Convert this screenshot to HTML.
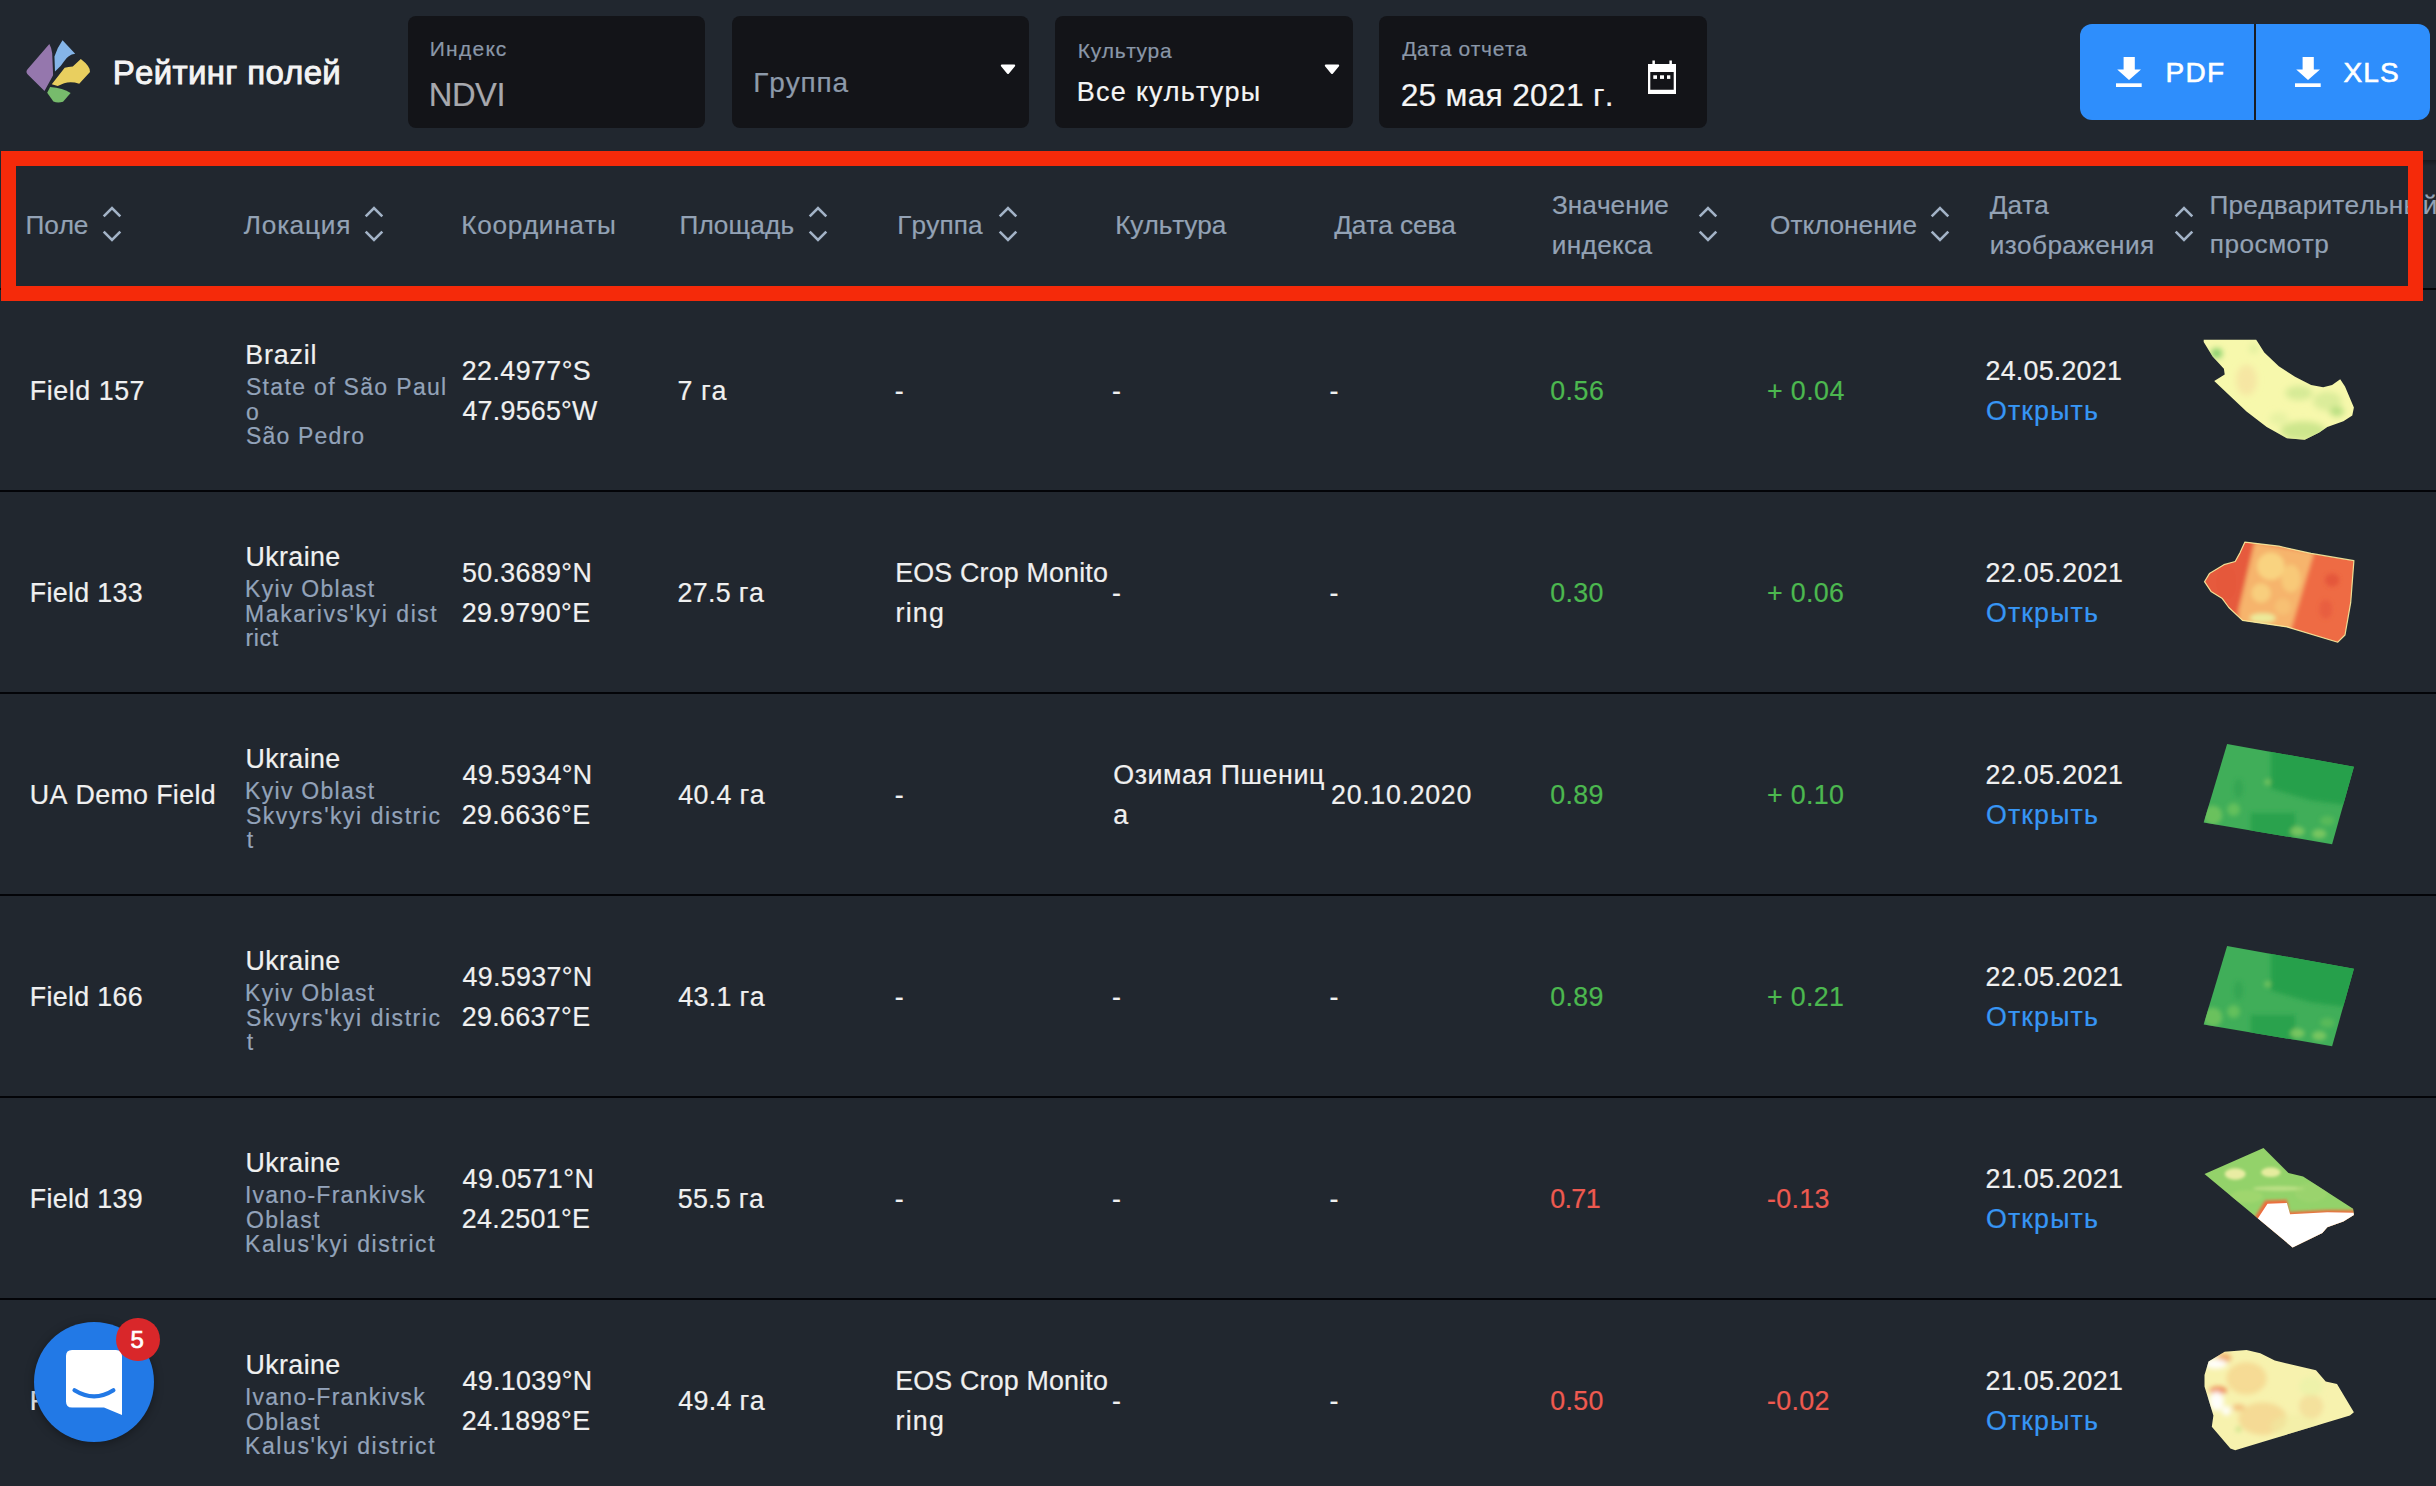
<!DOCTYPE html>
<html><head><meta charset="utf-8"><title>Рейтинг полей</title>
<style>
html,body{margin:0;padding:0;}
body{width:2436px;height:1486px;background:#21272f;position:relative;overflow:hidden;font-family:"Liberation Sans",sans-serif;}
.t{position:absolute;white-space:pre;font-kerning:none;font-variant-ligatures:none;}
</style></head><body>
<svg style="position:absolute;left:20px;top:30px" width="80" height="80" viewBox="0 0 1486 1486">
<path d="M545 262 Q585 330 598 430 L615 840 L455 1135 L140 820 Q100 775 140 730 Z" fill="#9577ad"/>
<path d="M790 190 L1025 440 Q890 460 820 580 Q760 680 650 770 L640 490 Q690 330 790 190 Z" fill="#85b5e8"/>
<path d="M590 1010 L830 700 Q900 690 980 680 L1130 540 Q1310 680 1300 780 L1100 1000 Q950 950 820 990 L700 1040 Z" fill="#e9cf5f"/>
<path d="M505 1165 L560 1060 Q800 1080 940 1170 L800 1335 Q700 1365 620 1330 Z" fill="#77bb6c"/>
</svg>
<div class="t" style="left:112.79px;top:51.97px;font-size:33px;line-height:41px;color:#f4f4f4;font-weight:400;letter-spacing:0.330px;-webkit-text-stroke:0.9px #f4f4f4">Рейтинг полей</div>
<div style="position:absolute;left:408px;top:16px;width:297px;height:112px;background:#131418;border-radius:8px"></div>
<div style="position:absolute;left:732px;top:16px;width:297px;height:112px;background:#131418;border-radius:8px"></div>
<div style="position:absolute;left:1055px;top:16px;width:298px;height:112px;background:#131418;border-radius:8px"></div>
<div style="position:absolute;left:1379px;top:16px;width:328px;height:112px;background:#131418;border-radius:8px"></div>
<div class="t" style="left:429.78px;top:35.62px;font-size:21px;line-height:26px;color:#8a97a8;font-weight:400;letter-spacing:1.253px;-webkit-text-stroke:0.2px #8a97a8;">Индекс</div>
<div class="t" style="left:428.82px;top:74.07px;font-size:32.7px;line-height:41px;color:#a7a8ad;font-weight:400;letter-spacing:-0.475px;-webkit-text-stroke:0.2px #a7a8ad;">NDVI</div>
<div class="t" style="left:753.30px;top:64.80px;font-size:28px;line-height:35px;color:#8d9aaa;font-weight:400;letter-spacing:0.813px;-webkit-text-stroke:0.2px #8d9aaa;">Группа</div>
<div class="t" style="left:1077.78px;top:38.12px;font-size:21px;line-height:26px;color:#8a97a8;font-weight:400;letter-spacing:0.631px;-webkit-text-stroke:0.2px #8a97a8;">Культура</div>
<div class="t" style="left:1076.79px;top:75.44px;font-size:27px;line-height:34px;color:#f5f5f5;font-weight:400;letter-spacing:1.267px;-webkit-text-stroke:0.2px #f5f5f5;">Все культуры</div>
<div class="t" style="left:1402.15px;top:35.52px;font-size:21px;line-height:26px;color:#8a97a8;font-weight:400;letter-spacing:0.661px;-webkit-text-stroke:0.2px #8a97a8;">Дата отчета</div>
<div class="t" style="left:1400.70px;top:74.88px;font-size:31.8px;line-height:40px;color:#f5f5f5;font-weight:400;letter-spacing:0.237px;-webkit-text-stroke:0.2px #f5f5f5;">25 мая 2021 г.</div>
<svg style="position:absolute;left:999px;top:63px" width="18" height="13" viewBox="0 0 18 13"><path d="M2.8 2.6 L15.2 2.6 L9 10 Z" fill="#fff" stroke="#fff" stroke-width="2" stroke-linejoin="round"/></svg>
<svg style="position:absolute;left:1323px;top:63px" width="18" height="13" viewBox="0 0 18 13"><path d="M2.8 2.6 L15.2 2.6 L9 10 Z" fill="#fff" stroke="#fff" stroke-width="2" stroke-linejoin="round"/></svg>
<svg style="position:absolute;left:1645px;top:58px" width="36" height="40" viewBox="0 0 36 40">
<rect x="7.4" y="2.5" width="2.5" height="5" fill="#fff"/><rect x="24.4" y="2.5" width="2.5" height="5" fill="#fff"/>
<path fill="#fff" fill-rule="evenodd" d="M3 6 H31 V36 H3 Z M5.3 14 V31.8 H28.7 V14 Z"/>
<rect x="8.3" y="17.3" width="3.7" height="3.6" fill="#fff"/><rect x="15" y="17.3" width="4" height="3.6" fill="#fff"/><rect x="22" y="17.3" width="3.3" height="3.6" fill="#fff"/>
</svg>
<div style="position:absolute;left:2080px;top:24px;width:350px;height:96px;border-radius:12px;background:#2e8efc;overflow:hidden"><div style="position:absolute;left:174px;top:0;width:2px;height:96px;background:#1a1d22"></div></div>
<svg style="position:absolute;left:2116px;top:56px" width="26" height="32" viewBox="0 0 26 32">
<path d="M7.6 1 H18.8 V13.5 H25 L13 24 L1.2 13.5 H7.6 Z" fill="#fff"/><rect x="0" y="27.3" width="25.7" height="3.7" fill="#fff"/></svg>
<svg style="position:absolute;left:2295px;top:56px" width="26" height="32" viewBox="0 0 26 32">
<path d="M7.6 1 H18.8 V13.5 H25 L13 24 L1.2 13.5 H7.6 Z" fill="#fff"/><rect x="0" y="27.3" width="25.7" height="3.7" fill="#fff"/></svg>
<div class="t" style="left:2165.50px;top:54.70px;font-size:28px;line-height:35px;color:#ffffff;font-weight:400;letter-spacing:1.309px;-webkit-text-stroke:0.6px #fff">PDF</div>
<div class="t" style="left:2343.57px;top:54.60px;font-size:28px;line-height:35px;color:#ffffff;font-weight:400;letter-spacing:1.045px;-webkit-text-stroke:0.6px #fff">XLS</div>
<div style="position:absolute;left:0px;top:288px;width:2436px;height:2px;background:#050609"></div>
<div style="position:absolute;left:2423px;top:160px;width:13px;height:6px;background:linear-gradient(#171b20,#21272f)"></div>
<div class="t" style="left:25.58px;top:208.52px;font-size:26.2px;line-height:33px;color:#93a2b5;font-weight:400;letter-spacing:-0.158px;-webkit-text-stroke:0.2px #93a2b5;">Поле</div>
<div class="t" style="left:243.77px;top:208.52px;font-size:26.2px;line-height:33px;color:#93a2b5;font-weight:400;letter-spacing:0.837px;-webkit-text-stroke:0.2px #93a2b5;">Локация</div>
<div class="t" style="left:461.35px;top:208.52px;font-size:26.2px;line-height:33px;color:#93a2b5;font-weight:400;letter-spacing:0.655px;-webkit-text-stroke:0.2px #93a2b5;">Координаты</div>
<div class="t" style="left:679.38px;top:208.52px;font-size:26.2px;line-height:33px;color:#93a2b5;font-weight:400;letter-spacing:0.191px;-webkit-text-stroke:0.2px #93a2b5;">Площадь</div>
<div class="t" style="left:897.25px;top:208.52px;font-size:26.2px;line-height:33px;color:#93a2b5;font-weight:400;letter-spacing:0.109px;-webkit-text-stroke:0.2px #93a2b5;">Группа</div>
<div class="t" style="left:1115.15px;top:208.52px;font-size:26.2px;line-height:33px;color:#93a2b5;font-weight:400;letter-spacing:-0.028px;-webkit-text-stroke:0.2px #93a2b5;">Культура</div>
<div class="t" style="left:1334.21px;top:208.72px;font-size:26.2px;line-height:33px;color:#93a2b5;font-weight:400;letter-spacing:-0.067px;-webkit-text-stroke:0.2px #93a2b5;">Дата сева</div>
<div class="t" style="left:1551.94px;top:189.02px;font-size:26.2px;line-height:33px;color:#93a2b5;font-weight:400;letter-spacing:0.037px;-webkit-text-stroke:0.2px #93a2b5;">Значение</div>
<div class="t" style="left:1551.68px;top:229.22px;font-size:26.2px;line-height:33px;color:#93a2b5;font-weight:400;letter-spacing:0.370px;-webkit-text-stroke:0.2px #93a2b5;">индекса</div>
<div class="t" style="left:1769.96px;top:208.52px;font-size:26.2px;line-height:33px;color:#93a2b5;font-weight:400;letter-spacing:0.088px;-webkit-text-stroke:0.2px #93a2b5;">Отклонение</div>
<div class="t" style="left:1989.71px;top:189.02px;font-size:26.2px;line-height:33px;color:#93a2b5;font-weight:400;letter-spacing:0.102px;-webkit-text-stroke:0.2px #93a2b5;">Дата</div>
<div class="t" style="left:1989.68px;top:229.22px;font-size:26.2px;line-height:33px;color:#93a2b5;font-weight:400;letter-spacing:0.378px;-webkit-text-stroke:0.2px #93a2b5;">изображения</div>
<div class="t" style="left:2209.48px;top:189.02px;font-size:26.2px;line-height:33px;color:#93a2b5;font-weight:400;letter-spacing:0.250px;-webkit-text-stroke:0.2px #93a2b5;">Предварительный</div>
<div class="t" style="left:2209.78px;top:227.92px;font-size:26.2px;line-height:33px;color:#93a2b5;font-weight:400;letter-spacing:0.490px;-webkit-text-stroke:0.2px #93a2b5;">просмотр</div>
<svg style="position:absolute;left:99px;top:204.3px" width="26" height="40" viewBox="-13 -20 26 40"><path d="M-8.3 -7.6 L0 -16 L8.3 -7.6 M-8.3 7.6 L0 16 L8.3 7.6" fill="none" stroke="#a3b3c7" stroke-width="2.6" stroke-linecap="butt"/></svg>
<svg style="position:absolute;left:361px;top:204.3px" width="26" height="40" viewBox="-13 -20 26 40"><path d="M-8.3 -7.6 L0 -16 L8.3 -7.6 M-8.3 7.6 L0 16 L8.3 7.6" fill="none" stroke="#a3b3c7" stroke-width="2.6" stroke-linecap="butt"/></svg>
<svg style="position:absolute;left:805px;top:204.3px" width="26" height="40" viewBox="-13 -20 26 40"><path d="M-8.3 -7.6 L0 -16 L8.3 -7.6 M-8.3 7.6 L0 16 L8.3 7.6" fill="none" stroke="#a3b3c7" stroke-width="2.6" stroke-linecap="butt"/></svg>
<svg style="position:absolute;left:995px;top:204.3px" width="26" height="40" viewBox="-13 -20 26 40"><path d="M-8.3 -7.6 L0 -16 L8.3 -7.6 M-8.3 7.6 L0 16 L8.3 7.6" fill="none" stroke="#a3b3c7" stroke-width="2.6" stroke-linecap="butt"/></svg>
<svg style="position:absolute;left:1695px;top:204.3px" width="26" height="40" viewBox="-13 -20 26 40"><path d="M-8.3 -7.6 L0 -16 L8.3 -7.6 M-8.3 7.6 L0 16 L8.3 7.6" fill="none" stroke="#a3b3c7" stroke-width="2.6" stroke-linecap="butt"/></svg>
<svg style="position:absolute;left:1927px;top:204.3px" width="26" height="40" viewBox="-13 -20 26 40"><path d="M-8.3 -7.6 L0 -16 L8.3 -7.6 M-8.3 7.6 L0 16 L8.3 7.6" fill="none" stroke="#a3b3c7" stroke-width="2.6" stroke-linecap="butt"/></svg>
<svg style="position:absolute;left:2171px;top:204.3px" width="26" height="40" viewBox="-13 -20 26 40"><path d="M-8.3 -7.6 L0 -16 L8.3 -7.6 M-8.3 7.6 L0 16 L8.3 7.6" fill="none" stroke="#a3b3c7" stroke-width="2.6" stroke-linecap="butt"/></svg>
<div style="position:absolute;left:0px;top:490px;width:2436px;height:2px;background:#030408"></div>
<div class="t" style="left:29.70px;top:373.91px;font-size:26.8px;line-height:34px;color:#f0f0f0;font-weight:400;letter-spacing:0.575px;-webkit-text-stroke:0.2px #f0f0f0;">Field 157</div>
<div class="t" style="left:245.30px;top:337.71px;font-size:26.8px;line-height:34px;color:#f0f0f0;font-weight:400;letter-spacing:0.816px;-webkit-text-stroke:0.2px #f0f0f0;">Brazil</div>
<div class="t" style="left:245.96px;top:373.33px;font-size:23px;line-height:29px;color:#93a3ba;font-weight:400;letter-spacing:1.329px;-webkit-text-stroke:0.2px #93a3ba;">State of São Paul</div>
<div class="t" style="left:246.03px;top:397.53px;font-size:23px;line-height:29px;color:#93a3ba;font-weight:400;letter-spacing:0.650px;-webkit-text-stroke:0.2px #93a3ba;">o</div>
<div class="t" style="left:245.96px;top:421.73px;font-size:23px;line-height:29px;color:#93a3ba;font-weight:400;letter-spacing:1.190px;-webkit-text-stroke:0.2px #93a3ba;">São Pedro</div>
<div class="t" style="left:461.75px;top:353.91px;font-size:26.8px;line-height:34px;color:#f0f0f0;font-weight:400;letter-spacing:0.439px;-webkit-text-stroke:0.2px #f0f0f0;">22.4977°S</div>
<div class="t" style="left:462.48px;top:393.71px;font-size:26.8px;line-height:34px;color:#f0f0f0;font-weight:400;letter-spacing:0.252px;-webkit-text-stroke:0.2px #f0f0f0;">47.9565°W</div>
<div class="t" style="left:677.43px;top:373.91px;font-size:26.8px;line-height:34px;color:#f0f0f0;font-weight:400;letter-spacing:0.614px;-webkit-text-stroke:0.2px #f0f0f0;">7 га</div>
<div class="t" style="left:894.71px;top:373.91px;font-size:26.8px;line-height:34px;color:#f0f0f0;font-weight:400;letter-spacing:0.350px;-webkit-text-stroke:0.2px #f0f0f0;">-</div>
<div class="t" style="left:1112.01px;top:373.91px;font-size:26.8px;line-height:34px;color:#f0f0f0;font-weight:400;letter-spacing:0.350px;-webkit-text-stroke:0.2px #f0f0f0;">-</div>
<div class="t" style="left:1329.51px;top:373.91px;font-size:26.8px;line-height:34px;color:#f0f0f0;font-weight:400;letter-spacing:0.350px;-webkit-text-stroke:0.2px #f0f0f0;">-</div>
<div class="t" style="left:1550.15px;top:373.71px;font-size:26.8px;line-height:34px;color:#4cb84f;font-weight:400;letter-spacing:0.555px;-webkit-text-stroke:0.2px #4cb84f;">0.56</div>
<div class="t" style="left:1766.89px;top:373.71px;font-size:26.8px;line-height:34px;color:#4cb84f;font-weight:400;letter-spacing:0.447px;-webkit-text-stroke:0.2px #4cb84f;">+ 0.04</div>
<div class="t" style="left:1985.55px;top:353.81px;font-size:26.8px;line-height:34px;color:#f0f0f0;font-weight:400;letter-spacing:0.236px;-webkit-text-stroke:0.2px #f0f0f0;">24.05.2021</div>
<div class="t" style="left:1985.93px;top:393.51px;font-size:26.8px;line-height:34px;color:#3796f5;font-weight:400;letter-spacing:1.120px;-webkit-text-stroke:0.2px #3796f5;">Открыть</div>
<div style="position:absolute;left:0px;top:692px;width:2436px;height:2px;background:#030408"></div>
<div class="t" style="left:29.70px;top:575.91px;font-size:26.8px;line-height:34px;color:#f0f0f0;font-weight:400;letter-spacing:0.350px;-webkit-text-stroke:0.2px #f0f0f0;">Field 133</div>
<div class="t" style="left:245.43px;top:539.71px;font-size:26.8px;line-height:34px;color:#f0f0f0;font-weight:400;letter-spacing:0.418px;-webkit-text-stroke:0.2px #f0f0f0;">Ukraine</div>
<div class="t" style="left:245.11px;top:575.33px;font-size:23px;line-height:29px;color:#93a3ba;font-weight:400;letter-spacing:1.274px;-webkit-text-stroke:0.2px #93a3ba;">Kyiv Oblast</div>
<div class="t" style="left:245.11px;top:599.53px;font-size:23px;line-height:29px;color:#93a3ba;font-weight:400;letter-spacing:1.560px;-webkit-text-stroke:0.2px #93a3ba;">Makarivs&#x27;kyi dist</div>
<div class="t" style="left:245.47px;top:623.73px;font-size:23px;line-height:29px;color:#93a3ba;font-weight:400;letter-spacing:0.650px;-webkit-text-stroke:0.2px #93a3ba;">rict</div>
<div class="t" style="left:462.03px;top:555.91px;font-size:26.8px;line-height:34px;color:#f0f0f0;font-weight:400;letter-spacing:0.350px;-webkit-text-stroke:0.2px #f0f0f0;">50.3689°N</div>
<div class="t" style="left:461.75px;top:595.71px;font-size:26.8px;line-height:34px;color:#f0f0f0;font-weight:400;letter-spacing:0.350px;-webkit-text-stroke:0.2px #f0f0f0;">29.9790°E</div>
<div class="t" style="left:677.45px;top:575.91px;font-size:26.8px;line-height:34px;color:#f0f0f0;font-weight:400;letter-spacing:0.350px;-webkit-text-stroke:0.2px #f0f0f0;">27.5 га</div>
<div class="t" style="left:895.20px;top:555.91px;font-size:26.8px;line-height:34px;color:#f0f0f0;font-weight:400;letter-spacing:0.193px;-webkit-text-stroke:0.2px #f0f0f0;">EOS Crop Monito</div>
<div class="t" style="left:895.62px;top:595.71px;font-size:26.8px;line-height:34px;color:#f0f0f0;font-weight:400;letter-spacing:1.173px;-webkit-text-stroke:0.2px #f0f0f0;">ring</div>
<div class="t" style="left:1112.01px;top:575.91px;font-size:26.8px;line-height:34px;color:#f0f0f0;font-weight:400;letter-spacing:0.350px;-webkit-text-stroke:0.2px #f0f0f0;">-</div>
<div class="t" style="left:1329.51px;top:575.91px;font-size:26.8px;line-height:34px;color:#f0f0f0;font-weight:400;letter-spacing:0.350px;-webkit-text-stroke:0.2px #f0f0f0;">-</div>
<div class="t" style="left:1550.15px;top:575.71px;font-size:26.8px;line-height:34px;color:#4cb84f;font-weight:400;letter-spacing:0.350px;-webkit-text-stroke:0.2px #4cb84f;">0.30</div>
<div class="t" style="left:1766.89px;top:575.71px;font-size:26.8px;line-height:34px;color:#4cb84f;font-weight:400;letter-spacing:0.350px;-webkit-text-stroke:0.2px #4cb84f;">+ 0.06</div>
<div class="t" style="left:1985.55px;top:555.81px;font-size:26.8px;line-height:34px;color:#f0f0f0;font-weight:400;letter-spacing:0.350px;-webkit-text-stroke:0.2px #f0f0f0;">22.05.2021</div>
<div class="t" style="left:1985.93px;top:595.51px;font-size:26.8px;line-height:34px;color:#3796f5;font-weight:400;letter-spacing:1.120px;-webkit-text-stroke:0.2px #3796f5;">Открыть</div>
<div style="position:absolute;left:0px;top:894px;width:2436px;height:2px;background:#030408"></div>
<div class="t" style="left:29.83px;top:777.91px;font-size:26.8px;line-height:34px;color:#f0f0f0;font-weight:400;letter-spacing:0.341px;-webkit-text-stroke:0.2px #f0f0f0;">UA Demo Field</div>
<div class="t" style="left:245.43px;top:741.71px;font-size:26.8px;line-height:34px;color:#f0f0f0;font-weight:400;letter-spacing:0.418px;-webkit-text-stroke:0.2px #f0f0f0;">Ukraine</div>
<div class="t" style="left:245.11px;top:777.33px;font-size:23px;line-height:29px;color:#93a3ba;font-weight:400;letter-spacing:1.274px;-webkit-text-stroke:0.2px #93a3ba;">Kyiv Oblast</div>
<div class="t" style="left:245.96px;top:801.53px;font-size:23px;line-height:29px;color:#93a3ba;font-weight:400;letter-spacing:1.529px;-webkit-text-stroke:0.2px #93a3ba;">Skvyrs&#x27;kyi distric</div>
<div class="t" style="left:246.65px;top:825.73px;font-size:23px;line-height:29px;color:#93a3ba;font-weight:400;letter-spacing:0.650px;-webkit-text-stroke:0.2px #93a3ba;">t</div>
<div class="t" style="left:462.48px;top:757.91px;font-size:26.8px;line-height:34px;color:#f0f0f0;font-weight:400;letter-spacing:0.350px;-webkit-text-stroke:0.2px #f0f0f0;">49.5934°N</div>
<div class="t" style="left:461.75px;top:797.71px;font-size:26.8px;line-height:34px;color:#f0f0f0;font-weight:400;letter-spacing:0.350px;-webkit-text-stroke:0.2px #f0f0f0;">29.6636°E</div>
<div class="t" style="left:678.18px;top:777.91px;font-size:26.8px;line-height:34px;color:#f0f0f0;font-weight:400;letter-spacing:0.350px;-webkit-text-stroke:0.2px #f0f0f0;">40.4 га</div>
<div class="t" style="left:894.71px;top:777.91px;font-size:26.8px;line-height:34px;color:#f0f0f0;font-weight:400;letter-spacing:0.350px;-webkit-text-stroke:0.2px #f0f0f0;">-</div>
<div class="t" style="left:1113.23px;top:757.91px;font-size:26.8px;line-height:34px;color:#f0f0f0;font-weight:400;letter-spacing:0.584px;-webkit-text-stroke:0.2px #f0f0f0;">Озимая Пшениц</div>
<div class="t" style="left:1113.36px;top:797.71px;font-size:26.8px;line-height:34px;color:#f0f0f0;font-weight:400;letter-spacing:0.350px;-webkit-text-stroke:0.2px #f0f0f0;">а</div>
<div class="t" style="left:1331.05px;top:777.91px;font-size:26.8px;line-height:34px;color:#f0f0f0;font-weight:400;letter-spacing:0.685px;-webkit-text-stroke:0.2px #f0f0f0;">20.10.2020</div>
<div class="t" style="left:1550.15px;top:777.71px;font-size:26.8px;line-height:34px;color:#4cb84f;font-weight:400;letter-spacing:0.350px;-webkit-text-stroke:0.2px #4cb84f;">0.89</div>
<div class="t" style="left:1766.89px;top:777.71px;font-size:26.8px;line-height:34px;color:#4cb84f;font-weight:400;letter-spacing:0.350px;-webkit-text-stroke:0.2px #4cb84f;">+ 0.10</div>
<div class="t" style="left:1985.55px;top:757.81px;font-size:26.8px;line-height:34px;color:#f0f0f0;font-weight:400;letter-spacing:0.350px;-webkit-text-stroke:0.2px #f0f0f0;">22.05.2021</div>
<div class="t" style="left:1985.93px;top:797.51px;font-size:26.8px;line-height:34px;color:#3796f5;font-weight:400;letter-spacing:1.120px;-webkit-text-stroke:0.2px #3796f5;">Открыть</div>
<div style="position:absolute;left:0px;top:1096px;width:2436px;height:2px;background:#030408"></div>
<div class="t" style="left:29.70px;top:979.91px;font-size:26.8px;line-height:34px;color:#f0f0f0;font-weight:400;letter-spacing:0.350px;-webkit-text-stroke:0.2px #f0f0f0;">Field 166</div>
<div class="t" style="left:245.43px;top:943.71px;font-size:26.8px;line-height:34px;color:#f0f0f0;font-weight:400;letter-spacing:0.418px;-webkit-text-stroke:0.2px #f0f0f0;">Ukraine</div>
<div class="t" style="left:245.11px;top:979.33px;font-size:23px;line-height:29px;color:#93a3ba;font-weight:400;letter-spacing:1.274px;-webkit-text-stroke:0.2px #93a3ba;">Kyiv Oblast</div>
<div class="t" style="left:245.96px;top:1003.53px;font-size:23px;line-height:29px;color:#93a3ba;font-weight:400;letter-spacing:1.529px;-webkit-text-stroke:0.2px #93a3ba;">Skvyrs&#x27;kyi distric</div>
<div class="t" style="left:246.65px;top:1027.73px;font-size:23px;line-height:29px;color:#93a3ba;font-weight:400;letter-spacing:0.650px;-webkit-text-stroke:0.2px #93a3ba;">t</div>
<div class="t" style="left:462.48px;top:959.91px;font-size:26.8px;line-height:34px;color:#f0f0f0;font-weight:400;letter-spacing:0.350px;-webkit-text-stroke:0.2px #f0f0f0;">49.5937°N</div>
<div class="t" style="left:461.75px;top:999.71px;font-size:26.8px;line-height:34px;color:#f0f0f0;font-weight:400;letter-spacing:0.350px;-webkit-text-stroke:0.2px #f0f0f0;">29.6637°E</div>
<div class="t" style="left:678.18px;top:979.91px;font-size:26.8px;line-height:34px;color:#f0f0f0;font-weight:400;letter-spacing:0.350px;-webkit-text-stroke:0.2px #f0f0f0;">43.1 га</div>
<div class="t" style="left:894.71px;top:979.91px;font-size:26.8px;line-height:34px;color:#f0f0f0;font-weight:400;letter-spacing:0.350px;-webkit-text-stroke:0.2px #f0f0f0;">-</div>
<div class="t" style="left:1112.01px;top:979.91px;font-size:26.8px;line-height:34px;color:#f0f0f0;font-weight:400;letter-spacing:0.350px;-webkit-text-stroke:0.2px #f0f0f0;">-</div>
<div class="t" style="left:1329.51px;top:979.91px;font-size:26.8px;line-height:34px;color:#f0f0f0;font-weight:400;letter-spacing:0.350px;-webkit-text-stroke:0.2px #f0f0f0;">-</div>
<div class="t" style="left:1550.15px;top:979.71px;font-size:26.8px;line-height:34px;color:#4cb84f;font-weight:400;letter-spacing:0.350px;-webkit-text-stroke:0.2px #4cb84f;">0.89</div>
<div class="t" style="left:1766.89px;top:979.71px;font-size:26.8px;line-height:34px;color:#4cb84f;font-weight:400;letter-spacing:0.350px;-webkit-text-stroke:0.2px #4cb84f;">+ 0.21</div>
<div class="t" style="left:1985.55px;top:959.81px;font-size:26.8px;line-height:34px;color:#f0f0f0;font-weight:400;letter-spacing:0.350px;-webkit-text-stroke:0.2px #f0f0f0;">22.05.2021</div>
<div class="t" style="left:1985.93px;top:999.51px;font-size:26.8px;line-height:34px;color:#3796f5;font-weight:400;letter-spacing:1.120px;-webkit-text-stroke:0.2px #3796f5;">Открыть</div>
<div style="position:absolute;left:0px;top:1298px;width:2436px;height:2px;background:#030408"></div>
<div class="t" style="left:29.70px;top:1181.91px;font-size:26.8px;line-height:34px;color:#f0f0f0;font-weight:400;letter-spacing:0.350px;-webkit-text-stroke:0.2px #f0f0f0;">Field 139</div>
<div class="t" style="left:245.43px;top:1145.71px;font-size:26.8px;line-height:34px;color:#f0f0f0;font-weight:400;letter-spacing:0.418px;-webkit-text-stroke:0.2px #f0f0f0;">Ukraine</div>
<div class="t" style="left:244.88px;top:1181.33px;font-size:23px;line-height:29px;color:#93a3ba;font-weight:400;letter-spacing:1.262px;-webkit-text-stroke:0.2px #93a3ba;">Ivano-Frankivsk</div>
<div class="t" style="left:245.91px;top:1205.53px;font-size:23px;line-height:29px;color:#93a3ba;font-weight:400;letter-spacing:1.417px;-webkit-text-stroke:0.2px #93a3ba;">Oblast</div>
<div class="t" style="left:245.11px;top:1229.73px;font-size:23px;line-height:29px;color:#93a3ba;font-weight:400;letter-spacing:1.564px;-webkit-text-stroke:0.2px #93a3ba;">Kalus&#x27;kyi district</div>
<div class="t" style="left:462.48px;top:1161.91px;font-size:26.8px;line-height:34px;color:#f0f0f0;font-weight:400;letter-spacing:0.557px;-webkit-text-stroke:0.2px #f0f0f0;">49.0571°N</div>
<div class="t" style="left:461.75px;top:1201.71px;font-size:26.8px;line-height:34px;color:#f0f0f0;font-weight:400;letter-spacing:0.329px;-webkit-text-stroke:0.2px #f0f0f0;">24.2501°E</div>
<div class="t" style="left:677.73px;top:1181.91px;font-size:26.8px;line-height:34px;color:#f0f0f0;font-weight:400;letter-spacing:0.298px;-webkit-text-stroke:0.2px #f0f0f0;">55.5 га</div>
<div class="t" style="left:894.71px;top:1181.91px;font-size:26.8px;line-height:34px;color:#f0f0f0;font-weight:400;letter-spacing:0.350px;-webkit-text-stroke:0.2px #f0f0f0;">-</div>
<div class="t" style="left:1112.01px;top:1181.91px;font-size:26.8px;line-height:34px;color:#f0f0f0;font-weight:400;letter-spacing:0.350px;-webkit-text-stroke:0.2px #f0f0f0;">-</div>
<div class="t" style="left:1329.51px;top:1181.91px;font-size:26.8px;line-height:34px;color:#f0f0f0;font-weight:400;letter-spacing:0.350px;-webkit-text-stroke:0.2px #f0f0f0;">-</div>
<div class="t" style="left:1550.15px;top:1181.71px;font-size:26.8px;line-height:34px;color:#ee5a50;font-weight:400;letter-spacing:-0.568px;-webkit-text-stroke:0.2px #ee5a50;">0.71</div>
<div class="t" style="left:1767.01px;top:1181.71px;font-size:26.8px;line-height:34px;color:#ee5a50;font-weight:400;letter-spacing:0.321px;-webkit-text-stroke:0.2px #ee5a50;">-0.13</div>
<div class="t" style="left:1985.55px;top:1161.81px;font-size:26.8px;line-height:34px;color:#f0f0f0;font-weight:400;letter-spacing:0.350px;-webkit-text-stroke:0.2px #f0f0f0;">21.05.2021</div>
<div class="t" style="left:1985.93px;top:1201.51px;font-size:26.8px;line-height:34px;color:#3796f5;font-weight:400;letter-spacing:1.120px;-webkit-text-stroke:0.2px #3796f5;">Открыть</div>
<div class="t" style="left:29.70px;top:1383.91px;font-size:26.8px;line-height:34px;color:#f0f0f0;font-weight:400;letter-spacing:0.350px;-webkit-text-stroke:0.2px #f0f0f0;">Field 140</div>
<div class="t" style="left:245.43px;top:1347.71px;font-size:26.8px;line-height:34px;color:#f0f0f0;font-weight:400;letter-spacing:0.418px;-webkit-text-stroke:0.2px #f0f0f0;">Ukraine</div>
<div class="t" style="left:244.88px;top:1383.33px;font-size:23px;line-height:29px;color:#93a3ba;font-weight:400;letter-spacing:1.262px;-webkit-text-stroke:0.2px #93a3ba;">Ivano-Frankivsk</div>
<div class="t" style="left:245.91px;top:1407.53px;font-size:23px;line-height:29px;color:#93a3ba;font-weight:400;letter-spacing:1.417px;-webkit-text-stroke:0.2px #93a3ba;">Oblast</div>
<div class="t" style="left:245.11px;top:1431.73px;font-size:23px;line-height:29px;color:#93a3ba;font-weight:400;letter-spacing:1.564px;-webkit-text-stroke:0.2px #93a3ba;">Kalus&#x27;kyi district</div>
<div class="t" style="left:462.48px;top:1363.91px;font-size:26.8px;line-height:34px;color:#f0f0f0;font-weight:400;letter-spacing:0.350px;-webkit-text-stroke:0.2px #f0f0f0;">49.1039°N</div>
<div class="t" style="left:461.75px;top:1403.71px;font-size:26.8px;line-height:34px;color:#f0f0f0;font-weight:400;letter-spacing:0.350px;-webkit-text-stroke:0.2px #f0f0f0;">24.1898°E</div>
<div class="t" style="left:678.18px;top:1383.91px;font-size:26.8px;line-height:34px;color:#f0f0f0;font-weight:400;letter-spacing:0.350px;-webkit-text-stroke:0.2px #f0f0f0;">49.4 га</div>
<div class="t" style="left:895.20px;top:1363.91px;font-size:26.8px;line-height:34px;color:#f0f0f0;font-weight:400;letter-spacing:0.193px;-webkit-text-stroke:0.2px #f0f0f0;">EOS Crop Monito</div>
<div class="t" style="left:895.62px;top:1403.71px;font-size:26.8px;line-height:34px;color:#f0f0f0;font-weight:400;letter-spacing:1.173px;-webkit-text-stroke:0.2px #f0f0f0;">ring</div>
<div class="t" style="left:1112.01px;top:1383.91px;font-size:26.8px;line-height:34px;color:#f0f0f0;font-weight:400;letter-spacing:0.350px;-webkit-text-stroke:0.2px #f0f0f0;">-</div>
<div class="t" style="left:1329.51px;top:1383.91px;font-size:26.8px;line-height:34px;color:#f0f0f0;font-weight:400;letter-spacing:0.350px;-webkit-text-stroke:0.2px #f0f0f0;">-</div>
<div class="t" style="left:1550.15px;top:1383.71px;font-size:26.8px;line-height:34px;color:#ee5a50;font-weight:400;letter-spacing:0.350px;-webkit-text-stroke:0.2px #ee5a50;">0.50</div>
<div class="t" style="left:1767.01px;top:1383.71px;font-size:26.8px;line-height:34px;color:#ee5a50;font-weight:400;letter-spacing:0.350px;-webkit-text-stroke:0.2px #ee5a50;">-0.02</div>
<div class="t" style="left:1985.55px;top:1363.81px;font-size:26.8px;line-height:34px;color:#f0f0f0;font-weight:400;letter-spacing:0.350px;-webkit-text-stroke:0.2px #f0f0f0;">21.05.2021</div>
<div class="t" style="left:1985.93px;top:1403.51px;font-size:26.8px;line-height:34px;color:#3796f5;font-weight:400;letter-spacing:1.120px;-webkit-text-stroke:0.2px #3796f5;">Открыть</div>
<svg style="position:absolute;left:2190px;top:330px" width="180" height="120" viewBox="0 0 180 120"><defs><clipPath id="cp1"><polygon points="13.7,9.7 66.2,9.7 74.3,22.6 88.8,36.3 105.0,46.8 121.1,54.9 133.2,57.3 142.1,54.9 150.2,49.3 155.0,56.5 163.9,77.5 162.3,85.6 153.4,91.3 137.3,96.9 129.2,102.6 114.7,109.8 96.9,108.2 76.7,96.9 56.5,81.6 24.2,50.9 34.7,44.4 33.9,38.8 22.6,26.6 13.7,12.1"/></clipPath><filter id="bl1" x="-20%" y="-20%" width="140%" height="140%"><feGaussianBlur stdDeviation="3"/></filter></defs><g clip-path="url(#cp1)"><rect x="0" y="0" width="180" height="120" fill="#f7f8ac"/><g filter="url(#bl1)"><ellipse cx="26.6" cy="23.4" rx="5.7" ry="4.8" fill="#6cc65c" opacity="0.9"/><ellipse cx="109.0" cy="63.0" rx="13.7" ry="7.3" fill="#d3e994" opacity="0.9"/><ellipse cx="137.3" cy="71.1" rx="14.5" ry="9.7" fill="#d8eb98" opacity="0.9"/><ellipse cx="113.1" cy="100.9" rx="22.6" ry="9.7" fill="#c9e489" opacity="0.9"/><ellipse cx="147.0" cy="81.6" rx="7.3" ry="4.8" fill="#b0db7c" opacity="0.9"/><ellipse cx="56.5" cy="50.1" rx="10.5" ry="15.3" fill="#f6e0a0" opacity="0.75"/><ellipse cx="63.8" cy="18.6" rx="4.8" ry="4.8" fill="#dcee9c" opacity="0.8"/><ellipse cx="88.8" cy="88.8" rx="9.7" ry="6.5" fill="#e4f0a0" opacity="0.8"/></g></g></svg>
<svg style="position:absolute;left:2190px;top:530px" width="180" height="120" viewBox="0 0 180 120"><defs><clipPath id="cp2"><polygon points="54.9,12.1 88.8,16.2 121.1,23.4 163.9,30.7 160.7,72.7 155.0,105.0 147.8,112.2 96.9,96.9 52.5,90.4 38.8,77.5 32.3,68.6 21.0,61.4 14.5,51.7 19.4,43.6 33.9,34.7 45.2,31.5 50.1,22.6"/></clipPath><filter id="bl2" x="-20%" y="-20%" width="140%" height="140%"><feGaussianBlur stdDeviation="2"/></filter></defs><g clip-path="url(#cp2)"><rect x="0" y="0" width="180" height="120" fill="#ee6b44"/><g filter="url(#bl2)"><polygon points="0.0,0.0 64.6,0.0 64.6,16.2 48.5,80.8 45.2,121.1 0.0,121.1" fill="#e65a3c" opacity="1.0"/><polygon points="64.6,12.1 124.4,22.6 100.9,100.9 48.5,96.9 48.5,80.8" fill="#f6b46c" opacity="1.0"/><ellipse cx="80.8" cy="36.3" rx="13.7" ry="13.7" fill="#f9d884" opacity="0.85"/><ellipse cx="100.9" cy="48.5" rx="9.7" ry="13.7" fill="#f8d07c" opacity="0.75"/><ellipse cx="71.1" cy="63.0" rx="9.7" ry="9.7" fill="#f9d884" opacity="0.7"/><ellipse cx="72.7" cy="88.0" rx="12.9" ry="4.8" fill="#eaf0a0" opacity="0.9"/><ellipse cx="92.9" cy="76.7" rx="8.1" ry="8.1" fill="#f8c878" opacity="0.6"/><ellipse cx="142.1" cy="50.1" rx="7.3" ry="6.5" fill="#e2523a" opacity="0.8"/><ellipse cx="135.7" cy="79.1" rx="6.5" ry="9.7" fill="#e4563c" opacity="0.6"/><ellipse cx="36.3" cy="52.5" rx="9.7" ry="16.2" fill="#e4553a" opacity="0.5"/></g></g><polygon points="54.9,12.1 88.8,16.2 121.1,23.4 163.9,30.7 160.7,72.7 155.0,105.0 147.8,112.2 96.9,96.9 52.5,90.4 38.8,77.5 32.3,68.6 21.0,61.4 14.5,51.7 19.4,43.6 33.9,34.7 45.2,31.5 50.1,22.6" fill="none" stroke="#f7eea0" stroke-width="1.2" stroke-linejoin="round" opacity="0.9"/></svg>
<svg style="position:absolute;left:2190px;top:732px" width="180" height="120" viewBox="0 0 180 120"><defs><clipPath id="cp3"><polygon points="37.1,12.1 163.9,34.7 142.1,112.2 13.7,90.4"/></clipPath><filter id="bl3" x="-20%" y="-20%" width="140%" height="140%"><feGaussianBlur stdDeviation="2"/></filter></defs><g clip-path="url(#cp3)"><rect x="0" y="0" width="180" height="120" fill="#40ae59"/><g filter="url(#bl3)"><polygon points="80.8,0.0 185.7,0.0 185.7,72.7 153.4,72.7 121.1,68.6 80.8,56.5" fill="#28a04b" opacity="1.0"/><polygon points="60.6,80.8 105.0,80.8 105.0,121.1 60.6,121.1" fill="#2aa24d" opacity="1.0"/><ellipse cx="22.6" cy="83.2" rx="9.7" ry="9.7" fill="#74c55e" opacity="0.8"/><ellipse cx="43.6" cy="77.5" rx="6.5" ry="6.5" fill="#6cc45c" opacity="0.8"/><ellipse cx="107.4" cy="99.3" rx="7.3" ry="4.8" fill="#86cc63" opacity="0.8"/><ellipse cx="129.2" cy="101.8" rx="7.3" ry="4.8" fill="#86cc63" opacity="0.8"/><ellipse cx="137.3" cy="88.8" rx="7.3" ry="4.8" fill="#62bf5a" opacity="0.7"/><ellipse cx="77.5" cy="50.1" rx="3.2" ry="3.2" fill="#7cc860" opacity="0.8"/><ellipse cx="48.5" cy="56.5" rx="4.8" ry="9.7" fill="#2ea04e" opacity="0.6"/></g></g></svg>
<svg style="position:absolute;left:2190px;top:934px" width="180" height="120" viewBox="0 0 180 120"><defs><clipPath id="cp4"><polygon points="37.1,12.1 163.9,34.7 142.1,112.2 13.7,90.4"/></clipPath><filter id="bl4" x="-20%" y="-20%" width="140%" height="140%"><feGaussianBlur stdDeviation="2"/></filter></defs><g clip-path="url(#cp4)"><rect x="0" y="0" width="180" height="120" fill="#40ae59"/><g filter="url(#bl4)"><polygon points="80.8,0.0 185.7,0.0 185.7,72.7 153.4,72.7 121.1,68.6 80.8,56.5" fill="#28a04b" opacity="1.0"/><polygon points="60.6,80.8 105.0,80.8 105.0,121.1 60.6,121.1" fill="#2aa24d" opacity="1.0"/><ellipse cx="22.6" cy="83.2" rx="9.7" ry="9.7" fill="#74c55e" opacity="0.8"/><ellipse cx="43.6" cy="77.5" rx="6.5" ry="6.5" fill="#6cc45c" opacity="0.8"/><ellipse cx="107.4" cy="99.3" rx="7.3" ry="4.8" fill="#86cc63" opacity="0.8"/><ellipse cx="129.2" cy="101.8" rx="7.3" ry="4.8" fill="#86cc63" opacity="0.8"/><ellipse cx="137.3" cy="88.8" rx="7.3" ry="4.8" fill="#62bf5a" opacity="0.7"/><ellipse cx="77.5" cy="50.1" rx="3.2" ry="3.2" fill="#7cc860" opacity="0.8"/><ellipse cx="48.5" cy="56.5" rx="4.8" ry="9.7" fill="#2ea04e" opacity="0.6"/></g></g></svg>
<svg style="position:absolute;left:2190px;top:1136px" width="180" height="120" viewBox="0 0 180 120"><defs><clipPath id="cp5"><polygon points="14.5,38.0 73.5,12.1 98.5,37.1 113.1,40.4 163.1,72.7 163.9,79.1 153.4,85.6 137.3,91.3 132.4,96.9 102.6,111.4"/></clipPath><filter id="bl5" x="-20%" y="-20%" width="140%" height="140%"><feGaussianBlur stdDeviation="1.5"/></filter></defs><g clip-path="url(#cp5)"><rect x="0" y="0" width="180" height="120" fill="#93d26a"/><g filter="url(#bl5)"><ellipse cx="45.2" cy="38.0" rx="10.5" ry="5.7" fill="#f2f0a8" opacity="0.9"/><ellipse cx="80.8" cy="36.3" rx="9.7" ry="4.8" fill="#eef0a4" opacity="0.9"/><ellipse cx="88.8" cy="52.5" rx="25.8" ry="2.4" fill="#d2e894" opacity="0.6"/><ellipse cx="56.5" cy="60.6" rx="16.2" ry="6.5" fill="#a6d872" opacity="0.6"/><ellipse cx="121.1" cy="56.5" rx="16.2" ry="9.7" fill="#a2d670" opacity="0.5"/><polygon points="64.6,81.6 75.1,64.6 96.9,63.8 99.3,75.9 137.3,73.9 165.5,74.3 165.5,121.1 64.6,121.1" fill="#ee6c3c" opacity="1.0"/></g></g></svg>
<svg style="position:absolute;left:2190px;top:1136px" width="180" height="120" viewBox="0 0 180 120"><defs><clipPath id="cp5b"><polygon points="14.5,38.0 73.5,12.1 98.5,37.1 113.1,40.4 163.1,72.7 163.9,79.1 153.4,85.6 137.3,91.3 132.4,96.9 102.6,111.4"/></clipPath></defs><g clip-path="url(#cp5b)"><polygon points="67.8,82.4 77.5,67.8 96.9,67.0 100.1,78.3 137.3,76.3 165.5,76.7 165.5,121.1 67.8,121.1" fill="#ffffff"/></g></svg>
<svg style="position:absolute;left:2190px;top:1338px" width="180" height="120" viewBox="0 0 180 120"><defs><clipPath id="cp6"><polygon points="34.7,13.7 56.5,12.1 70.3,15.3 84.8,22.6 126.0,32.3 135.7,43.6 147.0,46.0 163.9,74.3 159.9,77.5 45.2,112.2 40.4,110.6 21.8,88.8 23.4,77.5 14.5,48.5 14.5,37.1 18.6,23.4"/></clipPath><filter id="bl6" x="-20%" y="-20%" width="140%" height="140%"><feGaussianBlur stdDeviation="2.5"/></filter></defs><g clip-path="url(#cp6)"><rect x="0" y="0" width="180" height="120" fill="#f7f2ae"/><g filter="url(#bl6)"><ellipse cx="56.5" cy="40.4" rx="20.2" ry="16.2" fill="#f4c880" opacity="0.55"/><ellipse cx="72.7" cy="80.8" rx="24.2" ry="16.2" fill="#f3c680" opacity="0.55"/><ellipse cx="121.1" cy="68.6" rx="12.1" ry="12.1" fill="#f2d08c" opacity="0.5"/><ellipse cx="28.3" cy="52.5" rx="8.9" ry="4.0" fill="#ec7444" opacity="0.85"/><ellipse cx="33.9" cy="20.2" rx="7.3" ry="4.8" fill="#ef9a58" opacity="0.8"/><ellipse cx="48.5" cy="69.5" rx="6.5" ry="3.2" fill="#f0a060" opacity="0.6"/><ellipse cx="25.8" cy="25.8" rx="11.3" ry="4.8" fill="#ffffff" opacity="0.95"/><ellipse cx="26.6" cy="63.0" rx="7.3" ry="9.7" fill="#ffffff" opacity="0.95"/><ellipse cx="36.3" cy="72.7" rx="4.8" ry="4.8" fill="#ffffff" opacity="0.9"/><ellipse cx="121.1" cy="48.5" rx="12.1" ry="9.7" fill="#e8f2a8" opacity="0.6"/><ellipse cx="48.5" cy="91.3" rx="2.4" ry="2.4" fill="#a8d870" opacity="0.8"/><ellipse cx="105.0" cy="88.8" rx="24.2" ry="12.1" fill="#f0eea4" opacity="0.5"/></g></g></svg>
<div style="position:absolute;left:34px;top:1322px;width:120px;height:120px;border-radius:50%;background:#2279e6;box-shadow:0 2px 10px rgba(0,0,0,.35)"></div>
<svg style="position:absolute;left:60px;top:1345px" width="70" height="75" viewBox="0 0 70 75">
<path d="M12 5 H56 Q62 5 62 11 V70 L44 62.4 H12 Q6 62.4 6 56.4 V11 Q6 5 12 5 Z" fill="#fff"/>
<path d="M14.5 45.3 Q34.2 57.5 53.4 45.3" fill="none" stroke="#2279e6" stroke-width="4.2" stroke-linecap="round"/>
</svg>
<div style="position:absolute;left:116.4px;top:1318px;width:43.4px;height:43.4px;border-radius:50%;background:#d9272a"></div>
<div class="t" style="left:130.54px;top:1325.08px;font-size:24px;line-height:30px;color:#ffffff;font-weight:400;letter-spacing:0.000px;-webkit-text-stroke:0.7px #fff">5</div>
<div style="position:absolute;left:1px;top:151px;width:2422px;height:150px;box-sizing:border-box;border:15px solid #f52a0a"></div>
</body></html>
